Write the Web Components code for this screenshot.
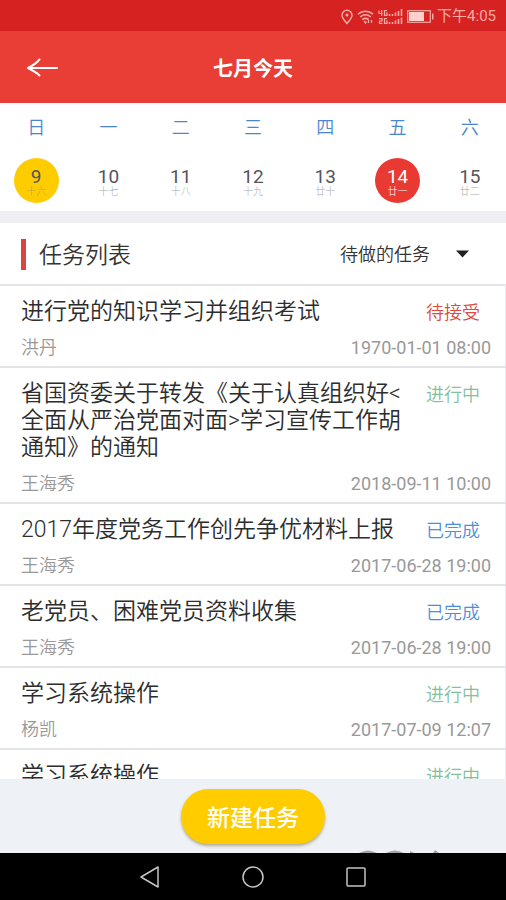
<!DOCTYPE html>
<html lang="zh-CN">
<head>
<meta charset="utf-8">
<meta name="viewport" content="width=device-width, initial-scale=1">
<title>七月今天</title>
<style>
html, body { height: 100%; margin: 0; }
body { font-family: Roboto, "Noto Sans CJK SC", sans-serif; color: #333; background: #fff; }
</style>
</head>
<body>
<task-app></task-app>

<template id="t-status">
<style>
:host { display: flex; align-items: center; justify-content: flex-end; gap: 3px; box-sizing: border-box; height: 31px; padding: 2px 10px 0; background: #d62322; color: #f7a9a4; font-size: 15px; line-height: 29px; flex: none; }
svg { display: block; }
.icons { display: flex; align-items: center; gap: 4px; }
</style>
<span class="icons">
<svg width="12" height="16" viewBox="0 0 12 16" fill="none" stroke="currentColor" stroke-width="1.4"><path d="M6 14.5C3.500 11.500 1 9 1 6.200a5 5 0 0 1 10 0C11 9 8.500 11.500 6 14.500Z"/><circle cx="6" cy="6" r="1.500" fill="currentColor" stroke="none"/></svg>
<svg width="17" height="15" viewBox="0 0 17 15" fill="none" stroke="currentColor" stroke-width="1.600"><path d="M1 5.200c4.500-4 10.500-4 15 0M3.200 8c3.300-2.800 7.300-2.800 10.600 0M5.400 10.600c2-1.600 4.200-1.600 6.200 0"/><path d="M7 12l1.500 2 1-1.500M11.500 11v3M14.500 11v3" stroke-width="1.300"/></svg>
<svg width="25" height="16" viewBox="0 0 25 16" fill="none" stroke="currentColor" stroke-width="1.200"><path d="M1 1.500V4.500H4.500M3.700 1v6M9 1.600H6.500V6.400H9V4H8M1 9.600H4V12H1.500V14.400H4.500M9 9.600H6.500V14.400H9V12H8"/><path d="M11.500 5v2M14.500 5v2M17.500 3.500V7M20.500 2v5M23.500 0v7M11.500 13v2M14.500 13v2M17.500 11.500V15M20.500 10v5M23.500 8.500V15" stroke-width="1.600"/></svg>
<svg width="27" height="13" viewBox="0 0 27 13"><rect x=".7" y=".7" width="22.600" height="11.600" fill="none" stroke="currentColor" stroke-width="1.200"/><path fill="#ffd0cd" d="M2 2h15v9H2z"/><path fill="currentColor" d="M25 3.500h1.500v6H25z"/></svg>
</span>
<span>下午4:05</span>
</template>

<template id="t-header">
<style>
:host { display: grid; grid-template-columns: 84px 1fr 84px; align-items: center; height: 72px; background: #e83e35; color: #fff; flex: none; }
button { display: flex; align-items: center; height: 48px; border: 0; padding: 2px 0 0 26px; background: none; color: inherit; }
h1 { margin: 0; padding-top: 4px; font-size: 20px; line-height: 30px; font-weight: 700; text-align: center; }
</style>
<button aria-label="返回"><svg width="34" height="20" viewBox="0 0 34 20" fill="none" stroke="currentColor" stroke-width="2" stroke-linecap="round" stroke-linejoin="round"><path d="M31 10H2M13.500 1.500C11 4.500 6 8 2 10c4 2 8.500 4.500 11.500 7.500"/></svg></button>
<h1><slot></slot></h1>
</template>

<template id="t-week">
<style>
:host { display: grid; grid-template-columns: repeat(7, 1fr); height: 108px; background: #fff; border-bottom: 12px solid #eeeef3; flex: none; }
</style>
<slot></slot>
</template>

<template id="t-day">
<style>
:host { display: flex; flex-direction: column; align-items: center; gap: 16px; padding-top: 10px; }
.name { color: #4c86cf; font-size: 18px; line-height: 29px; font-weight: 350; }
button { display: flex; flex-direction: column; align-items: center; justify-content: center; width: 45px; height: 45px; border: 0; border-radius: 50%; padding: 5px 0 0; background: none; font: inherit; color: #55555c; }
.num { font-size: 19px; line-height: 18px; }
.lunar { font-size: 10px; line-height: 12px; color: #aaa; font-weight: 300; }
:host([state="marked"]) button { background: #fc0; }
:host([state="marked"]) .lunar { color: #c9a53a; }
:host([state="selected"]) button { background: #e83a32; color: #fff; }
:host([state="selected"]) .lunar { color: #fff; }
</style>
<span class="name"></span>
<button><span class="num"></span><span class="lunar"></span></button>
</template>

<template id="t-filter">
<style>
:host { display: flex; align-items: center; box-sizing: border-box; height: 63px; padding: 1px 37px 0 21px; background: #fff; border-bottom: 2px solid #e6e6e9; flex: none; }
h2 { margin: 0; font-size: 23px; line-height: 31px; font-weight: 350; border-left: 5px solid #d9453f; padding-left: 13px; flex: 1; }
h2 span { display: block; padding-top: 3px; line-height: 28px; }
label { display: flex; align-items: center; gap: 24px; }
select { appearance: none; border: 0; margin: 0; padding: 2px 0 0; background: none; color: #333; font: inherit; font-size: 18px; line-height: 28px; width: 92px; font-weight: 350; }
svg { display: block; }
</style>
<h2><span>任务列表</span></h2>
<label><select aria-label="任务筛选"><option>待做的任务</option></select><svg width="13" height="8" viewBox="0 0 13 8"><path fill="#222" d="M0 0.500h13L6.500 7.500z"/></svg></label>
</template>

<template id="t-item">
<style>
:host { display: block; padding: 12px 14px 5px 21px; border-bottom: 2px solid #e3e3e5; border-right: 1px solid #e8e8f2; background: #fff; }
.row { display: flex; justify-content: space-between; align-items: baseline; }
h3 { margin: 0; width: 83%; font-size: 23px; line-height: 27px; font-weight: 350; color: #2d2d2d; word-break: break-all; }
.state { flex: none; margin-right: 11px; font-size: 18px; line-height: 23px; font-weight: 350; white-space: nowrap; }
.meta { margin-top: 10px; font-size: 18px; line-height: 26px; color: #999; font-weight: 350; }
time { font-weight: 400; }
:host([state="待接受"]) .state { color: #dc4a40; }
:host([state="进行中"]) .state { color: #83c09c; }
:host([state="已完成"]) .state { color: #4a90d9; }
</style>
<div class="row"><h3><slot></slot></h3><span class="state"></span></div>
<div class="row meta"><span class="who"></span><time></time></div>
</template>

<template id="t-action">
<style>
:host { position: relative; display: flex; justify-content: center; align-items: flex-start; height: 64px; padding-top: 10px; background: #eef1f5; flex: none; overflow: hidden; }
button { height: 55px; padding: 0 26px 1px; border: 0; border-radius: 28px; background: #fc0; color: #fff; font: inherit; font-size: 23px; font-weight: 500; box-shadow: 0 2px 3px rgba(110, 90, 30, .45); }
svg { position: absolute; right: 62px; bottom: 0; }
</style>
<button><slot></slot></button>
<svg width="86" height="3" viewBox="0 0 86 3" fill="#a2a4a6" aria-hidden="true"><path d="M1 3q9-5 18 0zM28 3q9-5 18 0zM52 1l4 2h-4zM75 3l2-3 4 3z"/></svg>
</template>

<template id="t-nav">
<style>
:host { display: flex; justify-content: center; align-items: center; gap: 81px; height: 47px; background: #000; color: #c4c4c4; flex: none; }
button { display: block; border: 0; padding: 0; background: none; color: inherit; }
svg { display: block; }
</style>
<button aria-label="返回"><svg width="22" height="24" viewBox="0 0 22 24" fill="none" stroke="currentColor" stroke-width="1.500" stroke-linejoin="round"><path d="M19 2v20L2 12z"/></svg></button>
<button aria-label="主屏幕"><svg width="22" height="24" viewBox="0 0 22 24" fill="none" stroke="currentColor" stroke-width="1.500"><circle cx="11" cy="12" r="10"/></svg></button>
<button aria-label="最近任务"><svg width="22" height="24" viewBox="0 0 22 24" fill="none" stroke="currentColor" stroke-width="1.500"><rect x="2" y="3" width="18" height="18" rx="1"/></svg></button>
</template>

<template id="t-app">
<style>
:host { display: flex; flex-direction: column; height: 100vh; }
main { flex: 1; min-height: 0; overflow: hidden; }
</style>
<status-bar></status-bar>
<page-header>七月今天</page-header>
<week-strip>
<day-cell name="日" num="9" lunar="十六" state="marked"></day-cell>
<day-cell name="一" num="10" lunar="十七"></day-cell>
<day-cell name="二" num="11" lunar="十八"></day-cell>
<day-cell name="三" num="12" lunar="十九"></day-cell>
<day-cell name="四" num="13" lunar="廿十"></day-cell>
<day-cell name="五" num="14" lunar="廿一" state="selected"></day-cell>
<day-cell name="六" num="15" lunar="廿二"></day-cell>
</week-strip>
<task-filter></task-filter>
<main>
<task-item state="待接受" who="洪丹" time="1970-01-01 08:00">进行党的知识学习并组织考试</task-item>
<task-item state="进行中" who="王海秀" time="2018-09-11 10:00">省国资委关于转发《关于认真组织好&lt;全面从严治党面对面&gt;学习宣传工作胡通知》的通知</task-item>
<task-item state="已完成" who="王海秀" time="2017-06-28 19:00">2017年度党务工作创先争优材料上报</task-item>
<task-item state="已完成" who="王海秀" time="2017-06-28 19:00">老党员、困难党员资料收集</task-item>
<task-item state="进行中" who="杨凯" time="2017-07-09 12:07">学习系统操作</task-item>
<task-item state="进行中" who="" time="">学习系统操作</task-item>
</main>
<action-bar>新建任务</action-bar>
<system-nav></system-nav>
</template>

<script>
class Base extends HTMLElement {
  constructor() {
    super();
    const t = document.getElementById(this.constructor.template);
    this.attachShadow({ mode: "open" }).append(document.importNode(t.content, true));
  }
  fill(map) {
    for (const [sel, attr] of Object.entries(map))
      this.shadowRoot.querySelector(sel).textContent = this.getAttribute(attr) || "";
  }
}
class StatusBar extends Base { static template = "t-status"; }
class PageHeader extends Base { static template = "t-header"; }
class WeekStrip extends Base { static template = "t-week"; }
class DayCell extends Base {
  static template = "t-day";
  connectedCallback() { this.fill({ ".name": "name", ".num": "num", ".lunar": "lunar" }); }
}
class TaskFilter extends Base { static template = "t-filter"; }
class TaskItem extends Base {
  static template = "t-item";
  connectedCallback() { this.fill({ ".state": "state", ".who": "who", "time": "time" }); }
}
class ActionBar extends Base { static template = "t-action"; }
class SystemNav extends Base { static template = "t-nav"; }
class TaskApp extends Base { static template = "t-app"; }
customElements.define("status-bar", StatusBar);
customElements.define("page-header", PageHeader);
customElements.define("week-strip", WeekStrip);
customElements.define("day-cell", DayCell);
customElements.define("task-filter", TaskFilter);
customElements.define("task-item", TaskItem);
customElements.define("action-bar", ActionBar);
customElements.define("system-nav", SystemNav);
customElements.define("task-app", TaskApp);
</script>
</body>
</html>
